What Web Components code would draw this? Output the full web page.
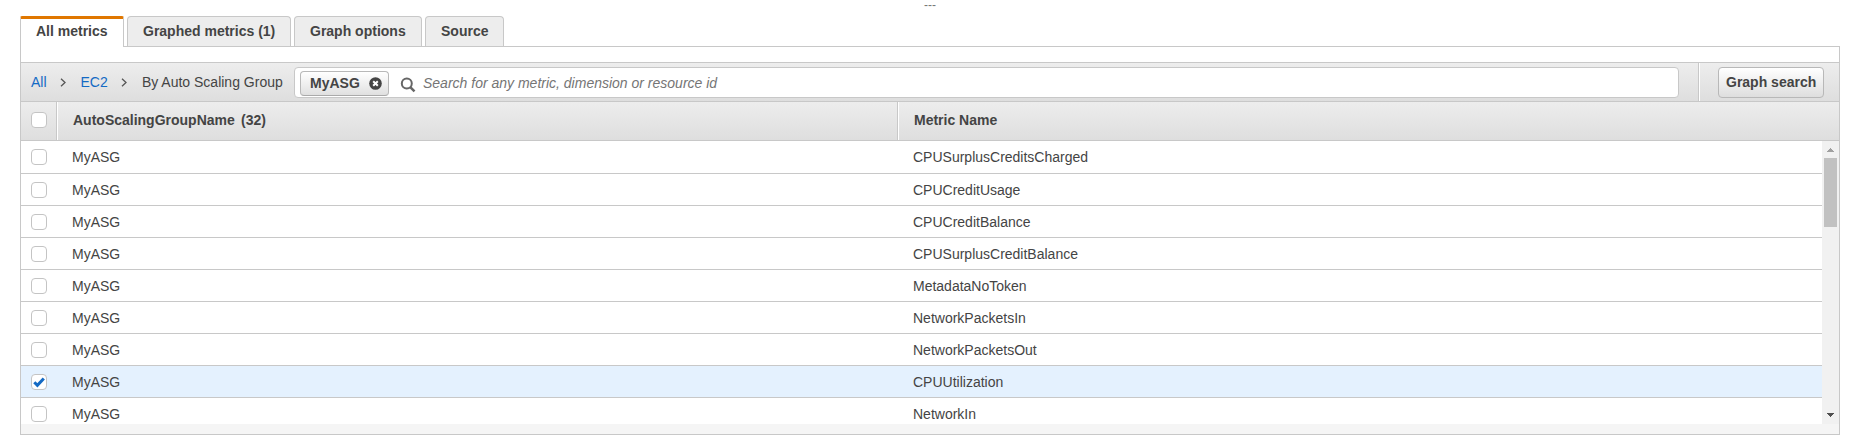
<!DOCTYPE html>
<html lang="en">
<head>
<meta charset="utf-8">
<title>Metrics</title>
<style>
body{margin:0;background:#fff;font:14px/18px "Liberation Sans",Arial,sans-serif;color:#444;overflow:hidden}
</style>
</head>
<body>
<metrics-panel></metrics-panel>

<template id="t-panel">
<style>
:host{display:flex;flex-direction:column;box-sizing:border-box;width:1852px;height:445px;padding:0 12px 10px 20px}
.grip{height:16px;font-size:12px;line-height:10px;text-align:center;color:#777;box-sizing:border-box}
.tabs{display:flex;gap:3px;height:30px}
.panel{height:387px;width:1818px;border:1px solid #c8c8c8;display:flex;flex-direction:column;background:#f5f5f5}
.space{height:15px;background:#fff}
.body{display:flex;height:283px;background:#fff;overflow:hidden}
.rows{flex:1;overflow:hidden}
</style>
<div class="grip">---</div>
<div class="tabs">
<metric-tab active style="width:104px">All metrics</metric-tab>
<metric-tab style="width:164px">Graphed metrics (1)</metric-tab>
<metric-tab style="width:128px">Graph options</metric-tab>
<metric-tab style="width:79px">Source</metric-tab>
</div>
<div class="panel">
<div class="space"></div>
<metric-toolbar></metric-toolbar>
<metric-head></metric-head>
<div class="body"><div class="rows"></div><scroll-bar></scroll-bar></div>
</div>
</template>

<template id="t-tab">
<style>
:host{display:block;box-sizing:border-box;height:30px;border:1px solid #c8c8c8;border-bottom:0;border-radius:4px 4px 0 0;background:#ededed;padding:5px 0 0 15px;font-weight:bold;white-space:nowrap}
:host([active]){height:31px;border-top:3px solid #e07700;border-radius:2px 2px 0 0;background:#fff;padding-top:3px;position:relative}
</style><slot></slot>
</template>

<template id="t-toolbar">
<style>
:host{display:flex;box-sizing:border-box;height:40px;border:1px solid #c8c8c8;border-width:1px 0;background:linear-gradient(#ededed,#dedede)}
.crumbs{display:flex;width:273px;padding-left:10px;box-sizing:border-box;align-items:center;white-space:nowrap}
.crumbs a{color:#146ac4}
.search{box-sizing:border-box;width:1385px;height:31px;margin-top:4px;border:1px solid #c8c8c8;border-radius:4px;background:#fff;display:flex;padding-left:5px}
.ph{font-style:italic;color:#757575;padding-top:7px;line-height:17px;margin-left:7px}
.mag{margin:9px 0 0 11px}
.end{margin-left:19px;border-left:1px solid #c8c8c8;box-shadow:inset 1px 0 #fff;padding:4px 0 0 19px}
</style>
<div class="crumbs"><a>All</a>
<svg width="7" height="9" viewBox="0 0 7 9" style="margin:0 13.6px 0 13.3px"><path d="M1 .8 5 4.5 1 8.2" fill="none" stroke="#555" stroke-width="1.3"/></svg>
<a>EC2</a>
<svg width="7" height="9" viewBox="0 0 7 9" style="margin:0 13.6px 0 13.6px"><path d="M1 .8 5 4.5 1 8.2" fill="none" stroke="#555" stroke-width="1.3"/></svg>
<span>By Auto Scaling Group</span></div>
<div class="search"><filter-token>MyASG</filter-token>
<svg class="mag" width="16" height="16" viewBox="0 0 16 16"><circle cx="6.8" cy="6.6" r="5" fill="none" stroke="#666" stroke-width="2"/><path d="m10.5 10.3 4 4" stroke="#666" stroke-width="2.4"/></svg>
<span class="ph">Search for any metric, dimension or resource id</span></div>
<div class="end"><push-button>Graph search</push-button></div>
</template>

<template id="t-token">
<style>
:host{display:flex;box-sizing:border-box;width:89px;height:25px;margin-top:3px;border:1px solid #b8b8b8;border-bottom-color:#aaa;border-radius:4px;background:linear-gradient(#fff,#e0e0e0);padding:2px 0 0 9px;font-weight:bold}
.t{width:59px}
svg{margin-top:3px}
</style><span class="t"><slot></slot></span>
<svg width="13" height="13" viewBox="0 0 13 13"><circle cx="6.5" cy="6.5" r="6.3" fill="#444"/><path d="m4.2 4.2 4.6 4.6m0-4.6L4.2 8.8" stroke="#fff" stroke-width="2"/></svg>
</template>

<template id="t-button">
<style>
:host{display:block;box-sizing:border-box;width:106px;height:31px;border:1px solid #b8b8b8;border-radius:4px;background:linear-gradient(#fff,#dedede);font-weight:bold;padding:5px 0 0 7px;white-space:nowrap}
</style><slot></slot>
</template>

<template id="t-head">
<style>
:host{display:flex;box-sizing:border-box;height:39px;border-bottom:1px solid #c8c8c8;background:linear-gradient(#ededed,#dedede);font-weight:bold}
.c{box-sizing:border-box;width:35px;padding:10px 0 0 10px}
.h{box-sizing:border-box;border-left:1px solid #c8c8c8;box-shadow:inset 1px 0 #fff;padding:9px 0 0 16px;white-space:nowrap}
.a{width:841px;display:flex}
.n{width:168px}
.m{flex:1}
</style>
<div class="c"><check-box></check-box></div>
<div class="h a"><span class="n">AutoScalingGroupName</span><span>(32)</span></div>
<div class="h m">Metric Name</div>
</template>

<template id="t-row">
<style>
:host{display:flex;box-sizing:border-box;height:32px;border-bottom:1px solid #c8c8c8;padding-left:10px}
:host([first]){height:33px}
:host([selected]){background:#e4f1fe}
check-box{margin-top:8px}
.g{width:841px;padding:7px 0 0 25px;box-sizing:border-box}
.m{padding:7px 0 0 25px}
</style>
<check-box></check-box><div class="g"><slot name="group"></slot></div><div class="m"><slot></slot></div>
</template>

<template id="t-check">
<style>
:host{display:block;box-sizing:border-box;width:16px;height:16px;border:1px solid #c4c4c4;border-radius:4px;background:#fff}
svg{display:none}
:host([checked]) svg{display:block}
</style>
<svg width="14" height="14" viewBox="0 0 14 14"><path d="m2.3 7.2 3.1 3.1L11.8 3.4" fill="none" stroke="#146ac4" stroke-width="3"/></svg>
</template>

<template id="t-scroll">
<style>
:host{display:flex;flex-direction:column;align-items:center;width:17px;height:283px;background:#f1f1f1}
.up{margin:7px 0 6px}
.thumb{width:13px;height:69px;background:#c1c1c1}
.down{margin-top:auto;margin-bottom:7px}
svg{display:block}
</style>
<svg class="up" width="7" height="4" shape-rendering="crispEdges"><path d="M3 0h1v1h1v1h1v1h1v1H0V3h1V2h1V1h1z" fill="#a0a0a0"/></svg>
<div class="thumb"></div>
<svg class="down" width="7" height="4" shape-rendering="crispEdges"><path d="M0 0h7v1H6v1H5v1H4v1H3V3H2V2H1V1H0z" fill="#505050"/></svg>
</template>

<script>
class TemplateElement extends HTMLElement {
  constructor() {
    super();
    this.attachShadow({ mode: 'open' })
      .append(document.getElementById(this.constructor.template).content.cloneNode(true));
  }
}
class CheckBox extends TemplateElement { static template = 't-check'; }
class MetricTab extends TemplateElement { static template = 't-tab'; }
class FilterToken extends TemplateElement { static template = 't-token'; }
class PushButton extends TemplateElement { static template = 't-button'; }
class MetricToolbar extends TemplateElement { static template = 't-toolbar'; }
class MetricHead extends TemplateElement { static template = 't-head'; }
class ScrollBar extends TemplateElement { static template = 't-scroll'; }
class MetricRow extends TemplateElement {
  static template = 't-row';
  connectedCallback() {
    this.shadowRoot.querySelector('check-box').toggleAttribute('checked', this.hasAttribute('selected'));
  }
}
class MetricsPanel extends TemplateElement {
  static template = 't-panel';
  connectedCallback() {
    const names = ['CPUSurplusCreditsCharged', 'CPUCreditUsage', 'CPUCreditBalance', 'CPUSurplusCreditBalance',
      'MetadataNoToken', 'NetworkPacketsIn', 'NetworkPacketsOut', 'CPUUtilization', 'NetworkIn'];
    this.shadowRoot.querySelector('.rows').innerHTML = names.map((n, i) =>
      `<metric-row${i === 0 ? ' first' : ''}${n === 'CPUUtilization' ? ' selected' : ''}><span slot="group">MyASG</span>${n}</metric-row>`).join('');
  }
}
customElements.define('check-box', CheckBox);
customElements.define('metric-tab', MetricTab);
customElements.define('filter-token', FilterToken);
customElements.define('push-button', PushButton);
customElements.define('metric-toolbar', MetricToolbar);
customElements.define('metric-head', MetricHead);
customElements.define('scroll-bar', ScrollBar);
customElements.define('metric-row', MetricRow);
customElements.define('metrics-panel', MetricsPanel);
</script>
</body>
</html>
